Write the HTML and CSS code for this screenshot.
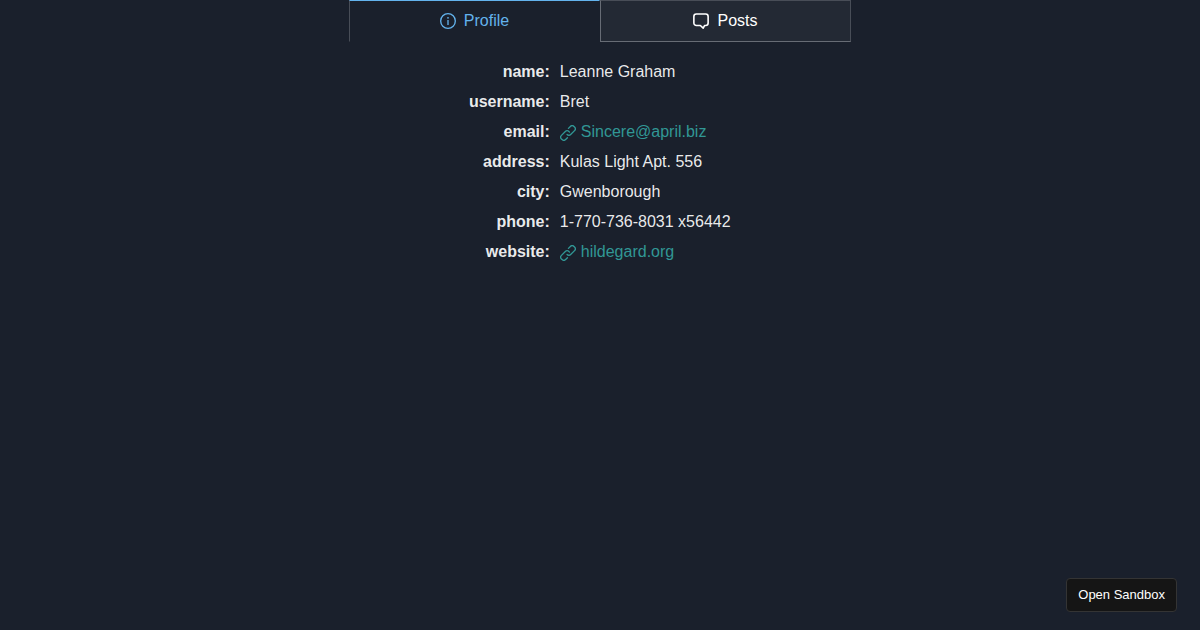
FILE: index.html
```html
<!DOCTYPE html>
<html lang="en">
<head>
<meta charset="utf-8">
<meta name="viewport" content="width=device-width, initial-scale=1">
<title>Profile</title>
<link rel="stylesheet" href="styles.css">
</head>
<body>
<svg class="symbols" aria-hidden="true">
  <symbol id="link" viewBox="0 0 24 24"><path d="M10.458,18.374,7.721,21.11a2.853,2.853,0,0,1-3.942,0l-.892-.891a2.787,2.787,0,0,1,0-3.941l5.8-5.8a2.789,2.789,0,0,1,3.942,0l.893.892A1,1,0,0,0,14.94,9.952l-.893-.892a4.791,4.791,0,0,0-6.771,0l-5.8,5.8a4.787,4.787,0,0,0,0,6.77l.892.891a4.785,4.785,0,0,0,6.771,0l2.736-2.735a1,1,0,1,0-1.414-1.415Z"/><path d="M22.526,2.363l-.892-.892a4.8,4.8,0,0,0-6.77,0l-2.905,2.9a1,1,0,0,0,1.414,1.414l2.9-2.9a2.79,2.79,0,0,1,3.941,0l.893.893a2.786,2.786,0,0,1,0,3.942l-5.8,5.8a2.769,2.769,0,0,1-1.971.817h0a2.766,2.766,0,0,1-1.969-.816,1,1,0,1,0-1.415,1.412,4.751,4.751,0,0,0,3.384,1.4h0a4.752,4.752,0,0,0,3.385-1.4l5.8-5.8a4.786,4.786,0,0,0,0-6.771Z"/></symbol>
</svg>
<main class="user">
  <div class="tabs" role="tablist">
    <button class="tab tab-active" type="button" role="tab" aria-selected="true">
      <svg class="tab-icon" viewBox="0 0 24 24" aria-hidden="true"><circle cx="12" cy="12" r="11" fill="none" stroke="currentColor" stroke-width="2"/><circle cx="12" cy="7.2" r="1.3" fill="currentColor"/><path d="M12 10.5v7.5" fill="none" stroke="currentColor" stroke-width="2"/></svg>
      Profile
    </button>
    <button class="tab" type="button" role="tab" aria-selected="false">
      <svg class="tab-icon" viewBox="0 0 24 24" aria-hidden="true"><path d="M5 1.5h14a3.7 3.7 0 0 1 3.700 3.700v9.800a3.700 3.700 0 0 1-3.700 3.700h-1.500l-2.200 4.100-4.300-4.100H5A3.700 3.700 0 0 1 1.300 15V5.200A3.700 3.700 0 0 1 5 1.500z" fill="none" stroke="currentColor" stroke-width="2.400" stroke-linejoin="round"/></svg>
      Posts
    </button>
  </div>
  <dl class="details">
    <dt>name:</dt><dd>Leanne Graham</dd>
    <dt>username:</dt><dd>Bret</dd>
    <dt>email:</dt><dd><a class="link" href="mailto:Sincere@april.biz"><svg class="link-icon" aria-hidden="true"><use href="#link"/></svg>Sincere@april.biz</a></dd>
    <dt>address:</dt><dd>Kulas Light Apt. 556</dd>
    <dt>city:</dt><dd>Gwenborough</dd>
    <dt>phone:</dt><dd>1-770-736-8031 x56442</dd>
    <dt>website:</dt><dd><a class="link" href="http://hildegard.org"><svg class="link-icon" aria-hidden="true"><use href="#link"/></svg>hildegard.org</a></dd>
  </dl>
</main>
<button class="sandbox" type="button">Open Sandbox</button>
</body>
</html>
```
FILE: styles.css
```css
* {
  box-sizing: border-box;
}

body {
  margin: 0;
  background: #1a202c;
  color: rgba(255, 255, 255, 0.92);
  font: 16px/24px Helvetica, "Liberation Sans", Arial, sans-serif;
}

.symbols {
  display: none;
}

.user {
  max-width: 502px;
  margin: 0 auto;
}

.tabs {
  display: flex;
}

.tab {
  flex: 1;
  display: flex;
  align-items: center;
  justify-content: center;
  gap: 8px;
  height: 42px;
  padding: 0 16px;
  border: 1px solid #484d57;
  border-bottom-color: #676c75;
  background: #232934;
  color: #fff;
  font: inherit;
}

.tab-active {
  border-color: #63b3ed transparent transparent #484d57;
  background: #1a202c;
  color: #63b3ed;
}

.tab-active + .tab {
  border-left-color: #676c75;
}

.tab-icon {
  width: 16px;
  height: 16px;
}

.details {
  display: grid;
  grid-template-columns: 40% 1fr;
  gap: 6px 10px;
  margin: 18px 0 0;
}

.details dt {
  text-align: right;
  font-weight: 700;
}

.details dd {
  margin: 0;
}

.link {
  display: flex;
  align-items: center;
  gap: 5px;
  width: fit-content;
  color: #319795;
  text-decoration: none;
}

.link-icon {
  width: 16px;
  height: 16px;
  margin-top: 2px;
  fill: currentColor;
}

.sandbox {
  position: fixed;
  right: 23px;
  bottom: 18px;
  height: 34px;
  padding: 0 11px;
  border: 1px solid #343434;
  border-radius: 4px;
  background: #151515;
  color: #fff;
  font: 13px/16px Helvetica, "Liberation Sans", Arial, sans-serif;
}
```
